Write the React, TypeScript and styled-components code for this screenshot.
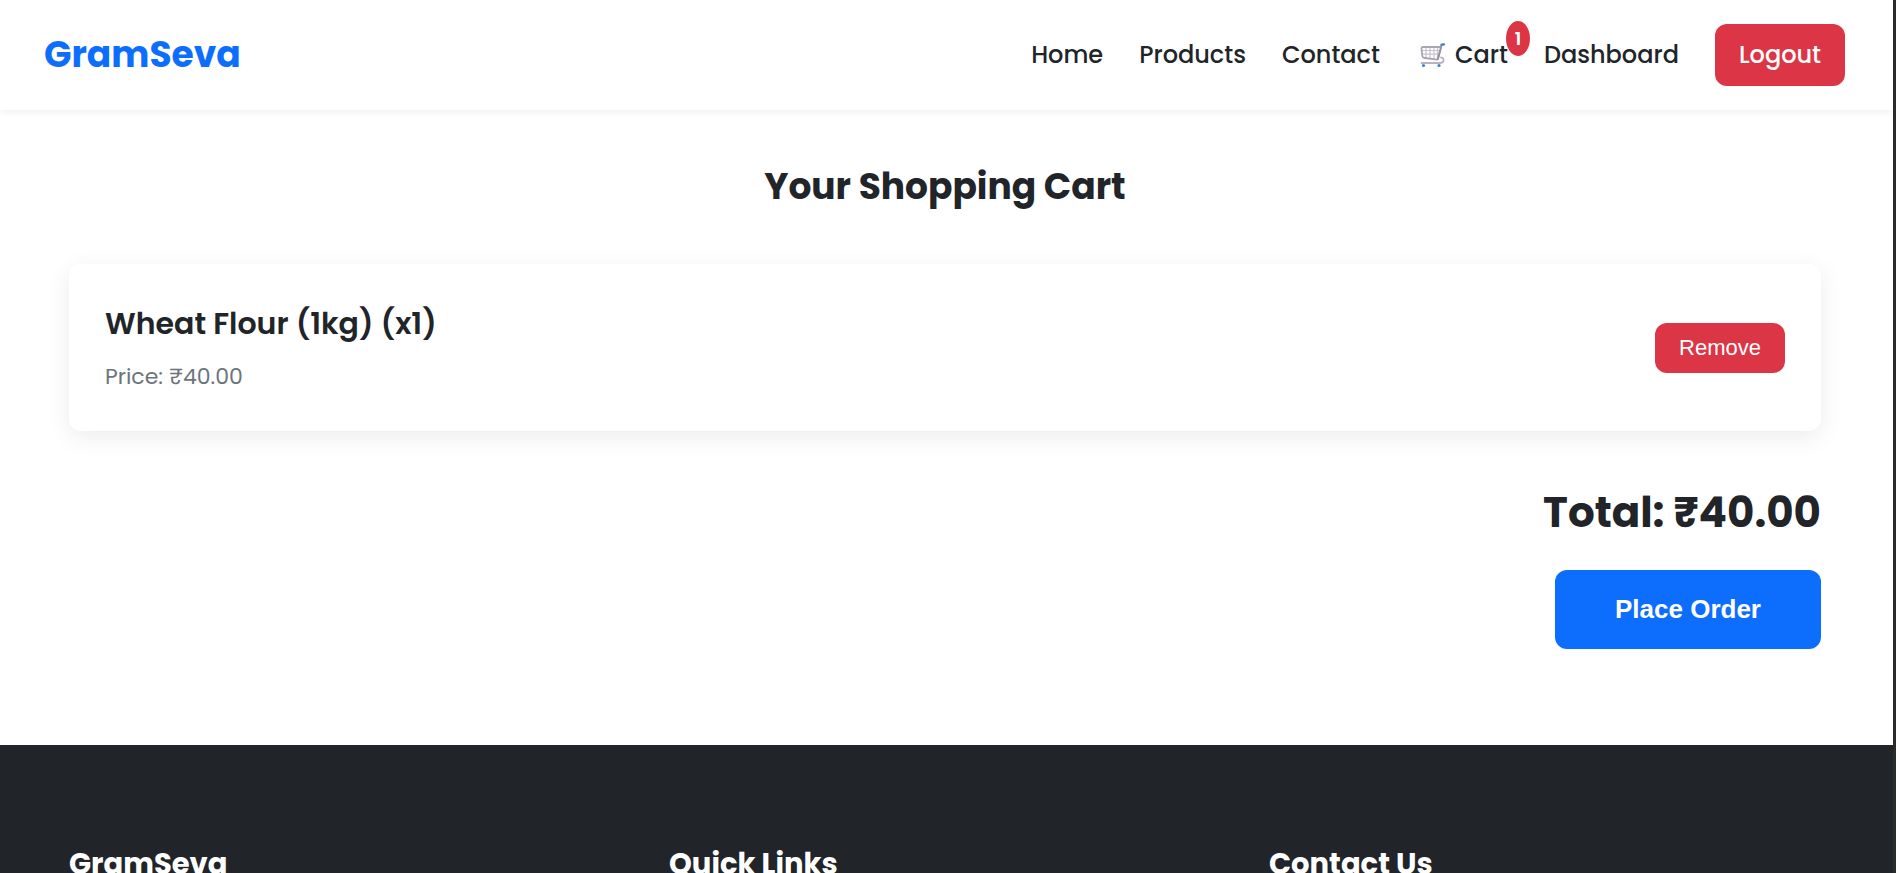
import React from 'react';
import styled, { createGlobalStyle, css } from 'styled-components';

const brandFont = "Poppins, Inter, 'Open Sans', sans-serif";
const controlFont = "'Liberation Sans', Arial, sans-serif";

const colors = {
  primary: '#0d6efd',
  danger: '#dc3545',
  dark: '#212529',
  muted: '#6c757d',
  frame: '#2b2b2b',
  white: '#ffffff',
};

const GlobalStyle = createGlobalStyle`
  *, *::before, *::after { box-sizing: border-box; }
  body {
    margin: 0;
    background: ${colors.white};
    color: ${colors.dark};
    font-family: ${brandFont};
    font-size: 24px;
    line-height: 38px;
  }
  h1, h2, h3, p, ul { margin: 0; padding: 0; }
`;

const Page = styled.div`
  display: flex;
  flex-direction: column;
  height: 100vh;
  overflow: hidden;
  border-right: 3px solid ${colors.frame};
`;

const Header = styled.header`
  display: flex;
  flex: none;
  align-items: center;
  justify-content: space-between;
  padding: 24px 48px 24px 44px;
  background: ${colors.white};
  box-shadow: 0 3px 6px rgba(0, 0, 0, 0.05);
`;

const Logo = styled.a`
  color: ${colors.primary};
  font-size: 36px;
  font-weight: 700;
  text-decoration: none;
`;

const NavList = styled.ul`
  display: flex;
  align-items: center;
  gap: 36px;
  list-style: none;
`;

const NavLink = styled.a`
  position: relative;
  display: flex;
  align-items: center;
  gap: 9px;
  color: ${colors.dark};
  font-weight: 500;
  text-decoration: none;
`;

const CartIcon = styled.svg`
  width: 30px;
  height: 28px;
`;

const Badge = styled.span`
  position: absolute;
  top: -15px;
  right: -22px;
  min-width: 24px;
  padding: 3px 8px;
  border-radius: 50%;
  background: ${colors.danger};
  color: ${colors.white};
  font-size: 18px;
  font-weight: 600;
  line-height: 29px;
  text-align: center;
`;

const buttonBase = css`
  border: 0;
  border-radius: 12px;
  color: ${colors.white};
  cursor: pointer;
`;

const LogoutButton = styled.button`
  ${buttonBase}
  padding: 12px 24px;
  background: ${colors.danger};
  font-family: ${brandFont};
  font-size: 24px;
  font-weight: 500;
  line-height: 38px;
`;

const Main = styled.main`
  flex: none;
  padding: 48px 72px 96px 69px;
`;

const Title = styled.h1`
  margin-bottom: 48px;
  font-size: 36px;
  font-weight: 700;
  line-height: 58px;
  text-align: center;
`;

const CartItem = styled.article`
  display: flex;
  align-items: center;
  justify-content: space-between;
  margin-bottom: 48px;
  padding: 36px;
  border-radius: 12px;
  background: ${colors.white};
  box-shadow: 0 6px 24px rgba(0, 0, 0, 0.08);
`;

const ItemDetails = styled.div`
  display: grid;
  gap: 12px;
`;

const ItemName = styled.h2`
  font-size: 30px;
  font-weight: 600;
  line-height: 47px;
`;

const ItemPrice = styled.p`
  color: ${colors.muted};
  font-size: 22px;
  line-height: 36px;
`;

const RemoveButton = styled.button`
  ${buttonBase}
  padding: 12px 24px;
  background: ${colors.danger};
  font-family: ${controlFont};
  font-size: 22px;
  line-height: 26px;
`;

const Summary = styled.section`
  display: flex;
  flex-direction: column;
  align-items: flex-end;
  gap: 24px;
`;

const Total = styled.h2`
  font-size: 42px;
  font-weight: 700;
  line-height: 67px;
`;

const OrderButton = styled.button`
  ${buttonBase}
  padding: 24px 60px;
  background: ${colors.primary};
  font-family: ${controlFont};
  font-size: 26px;
  font-weight: 700;
  line-height: 31px;
`;

const Footer = styled.footer`
  display: grid;
  flex: 1 0 auto;
  grid-template-columns: repeat(3, 1fr);
  gap: 48px;
  padding: 96px 72px 0 69px;
  background: ${colors.dark};
`;

const FooterHeading = styled.h3`
  color: ${colors.white};
  font-size: 29px;
  font-weight: 700;
  line-height: 46px;
`;

const meshLines = 'M4 9.500H21.500M4.500 13.200H20.500M8 6V17M12 6V17.500M16 6V18M19.500 6V18';

export default function App() {
  return (
    <>
      <GlobalStyle />
      <Page>
        <Header>
          <Logo href="#">GramSeva</Logo>
          <nav>
            <NavList>
              <li><NavLink href="#home">Home</NavLink></li>
              <li><NavLink href="#products">Products</NavLink></li>
              <li><NavLink href="#contact">Contact</NavLink></li>
              <li>
                <NavLink href="#cart">
                  <CartIcon viewBox="-2 0 30 28" fill="none" aria-hidden="true">
                    <path d={meshLines} stroke="#c6c2cc" strokeWidth="1.2" />
                    <path d="M22.500 6H5Q3.300 6 3.500 8L4.300 15Q4.500 16.800 6.500 17L19.500 18.600L23.500 4" stroke="#aaa4b0" strokeWidth="1.8" strokeLinejoin="round" />
                    <path d="M20 18.500L23.500 5" stroke="#958f9b" strokeWidth="1.6" />
                    <path d="M23 16.500Q26 17 25.500 19.500Q25 22 22 22H3.500" stroke="#b9b3c0" strokeWidth="1.8" strokeLinecap="round" />
                    <path d="M23.500 3.800L26 3.400" stroke="#3f83d6" strokeWidth="2.400" strokeLinecap="round" />
                    <circle cx="5.500" cy="24.500" r="1.600" fill="#3f83d6" />
                    <circle cx="21" cy="24.500" r="1.600" fill="#3f83d6" />
                  </CartIcon>
                  Cart
                  <Badge>1</Badge>
                </NavLink>
              </li>
              <li><NavLink href="#dashboard">Dashboard</NavLink></li>
              <li><LogoutButton type="button">Logout</LogoutButton></li>
            </NavList>
          </nav>
        </Header>
        <Main>
          <Title>Your Shopping Cart</Title>
          <CartItem>
            <ItemDetails>
              <ItemName>Wheat Flour (1kg) (x1)</ItemName>
              <ItemPrice>Price: ₹40.00</ItemPrice>
            </ItemDetails>
            <RemoveButton type="button">Remove</RemoveButton>
          </CartItem>
          <Summary>
            <Total>Total: ₹40.00</Total>
            <OrderButton type="button">Place Order</OrderButton>
          </Summary>
        </Main>
        <Footer>
          <FooterHeading>GramSeva</FooterHeading>
          <FooterHeading>Quick Links</FooterHeading>
          <FooterHeading>Contact Us</FooterHeading>
        </Footer>
      </Page>
    </>
  );
}
